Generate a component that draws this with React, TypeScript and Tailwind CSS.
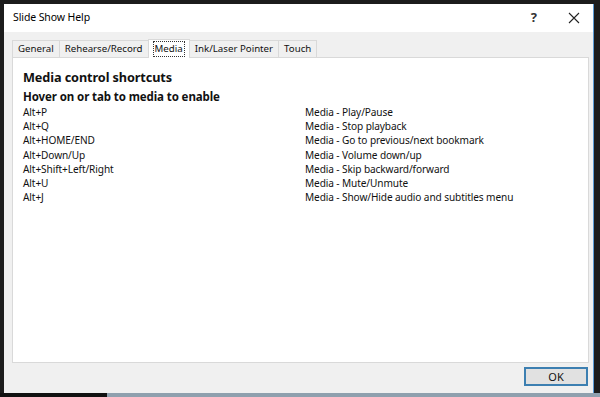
import React from 'react';

const tabs = ['General', 'Rehearse/Record', 'Media', 'Ink/Laser Pointer', 'Touch'];

const shortcuts: [string, string][] = [
  ['Alt+P', 'Media - Play/Pause'],
  ['Alt+Q', 'Media - Stop playback'],
  ['Alt+HOME/END', 'Media - Go to previous/next bookmark'],
  ['Alt+Down/Up', 'Media - Volume down/up'],
  ['Alt+Shift+Left/Right', 'Media - Skip backward/forward'],
  ['Alt+U', 'Media - Mute/Unmute'],
  ['Alt+J', 'Media - Show/Hide audio and subtitles menu'],
];

const font = { fontFamily: '"Noto Sans", "Open Sans", sans-serif' };

const App: React.FC = () => {
  return (
    <div className="w-[600px] h-[397px] bg-[#1c1c1c] flex flex-col overflow-hidden text-[#111]" style={font}>
      <div className="h-[4px]" />
      <div className="flex flex-1 min-h-0">
        <div className="w-[4px]" />
        {/* dialog window */}
        <div className="w-[590px] h-[389px] flex flex-col bg-[#f0f0f0] border-r border-[#5b9bd5]">
          <div className="h-[28px] bg-white flex items-center pl-[9px] pr-[12px]">
            <span className="text-[10.5px] tracking-[-0.1px] text-black">Slide Show Help</span>
            <div className="flex-1" />
            <span className="text-[13px] font-bold text-[#333] mr-[31px]">?</span>
            <svg width="12" height="12" viewBox="0 0 12 12" className="mr-[1px]">
              <path d="M1 1 L11 11 M11 1 L1 11" stroke="#222" strokeWidth="1.1" />
            </svg>
          </div>
          <div className="flex flex-col flex-1 pl-[8px] pr-[4px] pt-[6px]">
            <div className="flex items-end h-[19px] text-[9.7px]">
              {tabs.map((t) =>
                t === 'Media' ? (
                  <div
                    key={t}
                    className="h-[19px] px-[4px] pt-[1px] bg-white border border-b-0 border-[#d9d9d9] flex items-start relative z-10 -mb-px -ml-px"
                  >
                    <span className="px-[1px] leading-[14px] border border-dotted border-[#333]">{t}</span>
                  </div>
                ) : (
                  <div
                    key={t}
                    className="h-[17px] px-[5px] bg-[#f0f0f0] border border-b-0 border-[#d9d9d9] -ml-px first:ml-0 flex items-center"
                  >
                    <span className="leading-[14px]">{t}</span>
                  </div>
                )
              )}
            </div>
            <div className="h-[306px] bg-white border border-[#d9d9d9] px-[10px] pt-[10px]">
              <div className="text-[12.7px] font-bold leading-[18px] tracking-[-0.1px]">Media control shortcuts</div>
              <div className="text-[11.5px] font-bold leading-[16px] mt-[3px] tracking-[-0.1px]">Hover on or tab to media to enable</div>
              <div className="grid grid-cols-[282px_1fr] text-[10.1px] leading-[14.2px] tracking-[-0.1px]">
                {shortcuts.map(([k, d]) => (
                  <React.Fragment key={k}>
                    <span>{k}</span>
                    <span>{d}</span>
                  </React.Fragment>
                ))}
              </div>
            </div>
            <div className="flex justify-end pt-[4px] pr-[1px]">
              <button className="w-[64px] h-[19px] bg-[#e1e1e1] border-2 border-[#3c7fb1] text-[11px] leading-none flex items-center justify-center">
                OK
              </button>
            </div>
          </div>
        </div>
        <div className="flex-1" />
      </div>
      <div className="h-[4px] flex">
        <div className="w-[107px] bg-[#111]" />
        <div className="flex-1 bg-[#8fa0ae]" />
      </div>
    </div>
  );
};

export default App;
